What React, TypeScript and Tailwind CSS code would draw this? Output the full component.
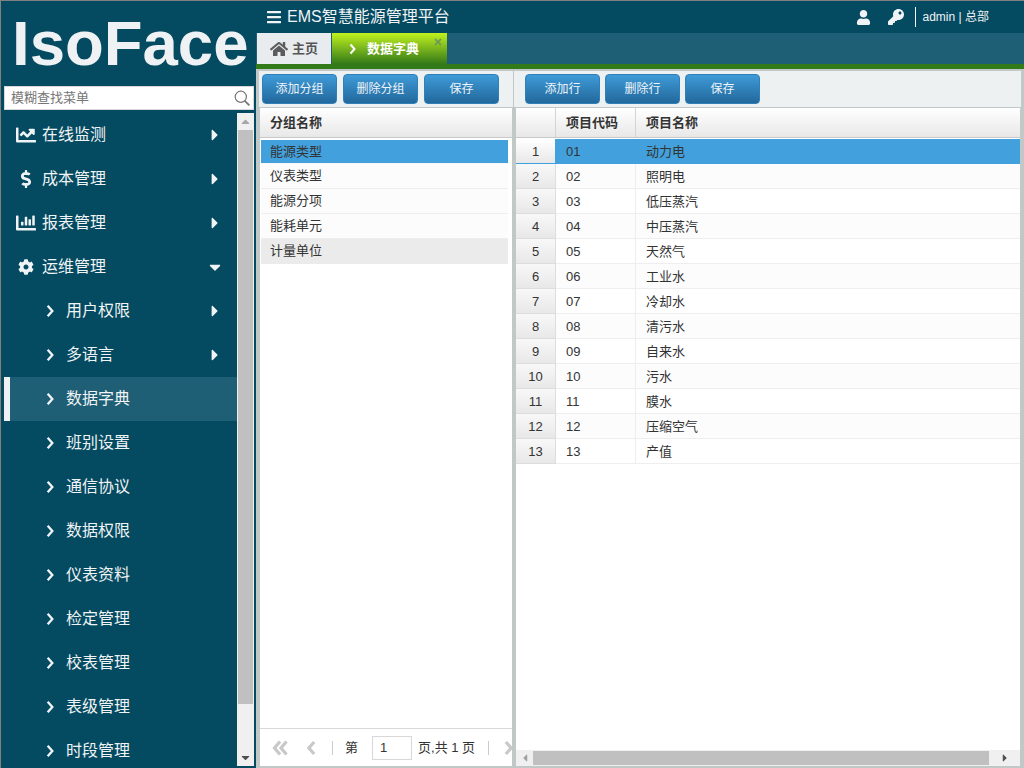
import React from "react";
import { FaBars, FaUser, FaKey, FaHome, FaChartLine, FaDollarSign, FaChartBar, FaCog, FaCaretRight, FaCaretDown, FaCaretLeft, FaCaretUp, FaTimes } from "react-icons/fa";

const font = { fontFamily: '"Liberation Sans","Noto Sans CJK SC",sans-serif' };

type M = { t: string; icon?: React.ReactNode; caret?: "r" | "d"; active?: boolean };
const menu: M[] = [
  { t: "在线监测", icon: <FaChartLine className="text-[20px]" />, caret: "r" },
  { t: "成本管理", icon: <FaDollarSign className="text-[18px]" />, caret: "r" },
  { t: "报表管理", icon: <FaChartBar className="text-[20px]" />, caret: "r" },
  { t: "运维管理", icon: <FaCog className="text-[16px]" />, caret: "d" },
  { t: "用户权限", caret: "r" },
  { t: "多语言", caret: "r" },
  { t: "数据字典", active: true },
  { t: "班别设置" },
  { t: "通信协议" },
  { t: "数据权限" },
  { t: "仪表资料" },
  { t: "检定管理" },
  { t: "校表管理" },
  { t: "表级管理" },
  { t: "时段管理" },
];

const groups = ["能源类型", "仪表类型", "能源分项", "能耗单元", "计量单位"];
const items = ["动力电", "照明电", "低压蒸汽", "中压蒸汽", "天然气", "工业水", "冷却水", "清污水", "自来水", "污水", "膜水", "压缩空气", "产值"];

function Chevron({ dir = "r", className, sw = 2 }: { dir?: "r" | "l"; className?: string; sw?: number }) {
  return (
    <svg viewBox="0 0 8 12" className={className} fill="none" stroke="currentColor" strokeWidth={sw}>
      <polyline points={dir === "r" ? "2,1.5 6,6 2,10.5" : "6,1.5 2,6 6,10.5"} />
    </svg>
  );
}

function Btn({ t }: { t: string }) {
  return (
    <button className="w-[75px] h-[30px] rounded-[4px] border border-[#2f7fb8] bg-gradient-to-b from-[#3f9bd8] to-[#22689c] text-[#eef4f8] text-[12px] flex items-center justify-center">
      {t}
    </button>
  );
}

function MenuRow({ m }: { m: M }) {
  const sub = !m.icon;
  return (
    <div className={`h-[44px] shrink-0 flex items-center text-[#f0f4f6] text-[16px] border-l-[6px] ${m.active ? "bg-[#1f5f75] border-[#eef2f4]" : "border-transparent"}`}>
      {sub ? (
        <>
          <Chevron className="ml-[35px] w-[10px] h-[14px] shrink-0" />
          <span className="ml-[11px]">{m.t}</span>
        </>
      ) : (
        <>
          <span className="w-[32px] flex justify-center shrink-0">{m.icon}</span>
          <span>{m.t}</span>
        </>
      )}
      <span className="ml-auto mr-[15px] flex w-[14px] justify-center">
        {m.caret === "r" && <FaCaretRight className="text-[18px]" />}
        {m.caret === "d" && <FaCaretDown className="text-[18px]" />}
      </span>
    </div>
  );
}

export default function App() {
  return (
    <div style={font} className="w-[1024px] h-[768px] overflow-hidden flex bg-[#c0c8c8] border-t border-[#808080] text-[13px] text-[#333]">
      {/* Sidebar */}
      <aside className="w-[256px] shrink-0 h-full bg-[#044a60] border-l border-[#808080] flex flex-col">
        <div className="h-[85px] shrink-0 text-[#eef2f4] font-bold text-[63.5px] leading-[85px] pl-[11px]">IsoFace</div>
        <div className="ml-[3px] w-[250px] h-[24px] shrink-0 bg-white border border-[#d8d8d8] flex items-center pl-[6px] pr-[3px] text-[13px] text-[#777]">
          <span className="flex-1">模糊查找菜单</span>
          <svg viewBox="0 0 16 16" className="w-[16px] h-[16px] text-[#777]" fill="none" stroke="currentColor" strokeWidth="1.2">
            <circle cx="6.8" cy="6.8" r="5.6" />
            <line x1="10.8" y1="10.8" x2="15.4" y2="15.4" strokeWidth="1.8" />
          </svg>
        </div>
        <div className="flex-1 min-h-0 flex mt-[3px] mb-[2px]">
          <div className="flex-1 min-w-0 overflow-hidden pl-[3px] flex flex-col">
            {menu.map((m) => (
              <MenuRow key={m.t} m={m} />
            ))}
          </div>
          <div className="w-[17px] mr-[2px] bg-[#f0f0f0] flex flex-col items-center shrink-0">
            <div className="h-[17px] shrink-0 flex items-center justify-center text-[#a8a8a8]"><FaCaretUp className="text-[13px]" /></div>
            <div className="w-[15px] flex-1 bg-[#c0c0c0]" />
            <div className="h-[62px] shrink-0 flex items-end pb-[2px] justify-center text-[#505050]"><FaCaretDown className="text-[13px]" /></div>
          </div>
        </div>
      </aside>

      {/* Main */}
      <main className="flex-1 min-w-0 h-full flex flex-col">
        <header className="h-[32px] shrink-0 bg-[#044a60] flex items-center text-[#f0f4f6]">
          <FaBars className="ml-[10px] text-[16px]" />
          <span className="ml-[5px] text-[16px]">EMS智慧能源管理平台</span>
          <div className="ml-auto flex items-center">
            <FaUser className="text-[15px]" />
            <FaKey className="ml-[17px] text-[16px]" />
            <div className="ml-[11px] w-px h-[20px] bg-[#f0f4f6]" />
            <span className="ml-[7px] text-[12px]">admin | 总部</span>
            <div className="w-[35px]" />
          </div>
        </header>
        <nav className="h-[31px] shrink-0 bg-[#1f5f75] flex pl-px">
          <div className="w-[74px] h-full bg-[#e8ecee] flex items-center justify-center text-[#555] font-bold gap-[4px]">
            <FaHome className="text-[18px] text-[#5c5c5c]" />
            <span>主页</span>
          </div>
          <div className="relative ml-px w-[115px] h-full bg-gradient-to-b from-[#c0f31c] to-[#337a18] flex items-center text-white font-bold">
            <Chevron className="ml-[16px] w-[9px] h-[12px] shrink-0" />
            <span className="ml-[10px]">数据字典</span>
            <FaTimes className="absolute right-[4px] top-[4px] text-[10px] text-[#6f9a55]" />
          </div>
        </nav>
        <div className="h-[5px] shrink-0 bg-[#337a18]" />

        <div className="flex-1 min-h-0 flex pt-[2px] pb-[2px] pl-[3px] pr-[3px] gap-px">
          {/* Left panel */}
          <section className="w-[254px] shrink-0 h-full flex flex-col">
            <div className="h-[36px] shrink-0 bg-[#eef1f2] flex items-start pt-[3px] pl-[3px] gap-[6px]">
              <Btn t="添加分组" />
              <Btn t="删除分组" />
              <Btn t="保存" />
            </div>
            <div className="mt-px ml-px w-[252px] flex-1 min-h-0 bg-white flex flex-col">
              <div className="h-[30px] shrink-0 bg-gradient-to-b from-white to-[#e8e8e8] border-b border-[#c8c8c8] flex items-center pl-[10px] font-bold">分组名称</div>
              <div className="flex-1 min-h-0 pl-px pt-[2px] w-[248px]">
                {groups.map((g, i) => (
                  <div key={g} className={`flex items-center pl-[9px] border-b ${i === 0 ? "h-[24px] bg-[#42a0dc] border-[#f5f5f5]" : i === 4 ? "h-[25px] bg-[#ebebeb] border-[#ebebeb]" : "h-[25px] bg-[#fcfcfc] border-[#eeeeee]"}`}>{g}</div>
                ))}
              </div>
              <div className="h-[38px] shrink-0 border-t border-[#d8d8d8] flex items-center overflow-hidden">
                <svg viewBox="0 0 16 16" className="ml-[12px] w-[16px] h-[16px] text-[#c8c8c8] shrink-0" fill="none" stroke="currentColor" strokeWidth="3.2">
                  <polyline points="8,1.5 2.5,8 8,14.5" />
                  <polyline points="14.5,1.5 9,8 14.5,14.5" />
                </svg>
                <Chevron dir="l" sw={2.4} className="ml-[18px] w-[11px] h-[16px] text-[#c8c8c8] shrink-0" />
                <div className="ml-[15px] w-px h-[14px] bg-[#ccc] shrink-0" />
                <span className="ml-[12px] shrink-0">第</span>
                <div className="ml-[14px] w-[40px] h-[24px] border border-[#d8d8d8] flex items-center pl-[7px] shrink-0">1</div>
                <span className="ml-[6px] shrink-0">页,共 1 页</span>
                <div className="ml-[13px] w-px h-[14px] bg-[#ccc] shrink-0" />
                <Chevron sw={2.4} className="ml-[14px] w-[11px] h-[16px] text-[#c8c8c8] shrink-0" />
              </div>
            </div>
          </section>

          {/* Right panel */}
          <section className="flex-1 min-w-0 h-full flex flex-col">
            <div className="h-[36px] shrink-0 bg-[#eef1f2] flex items-start pt-[3px] pl-[11px] gap-[5px]">
              <Btn t="添加行" />
              <Btn t="删除行" />
              <Btn t="保存" />
            </div>
            <div className="mt-px ml-[2px] mr-px flex-1 min-h-0 bg-white flex flex-col">
              <div className="h-[30px] shrink-0 bg-gradient-to-b from-white to-[#e8e8e8] border-b border-[#c8c8c8] flex items-center">
                <div className="w-[40px] h-full border-r border-[#d4d4d4] shrink-0" />
                <div className="w-[80px] h-full flex items-center pl-[10px] border-r border-[#d4d4d4] font-bold shrink-0">项目代码</div>
                <div className="flex-1 h-full flex items-center pl-[10px] font-bold">项目名称</div>
              </div>
              <div className="flex-1 min-h-0 pt-px">
                {items.map((t, i) => (
                  <div key={t} className="h-[25px] flex">
                    <div className={`w-[40px] shrink-0 pt-px bg-gradient-to-b to-[#e8e8e8] border-r border-b flex items-center justify-center ${i === 0 ? "from-white border-[#42a0dc]" : "from-[#f8f8f8] border-[#dddddd]"}`}>{i + 1}</div>
                    <div className={`flex-1 flex border-b ${i === 0 ? "bg-[#42a0dc] border-[#42a0dc]" : "border-[#eeeeee] " + (i % 2 ? "bg-[#fcfcfc]" : "bg-white")}`}>
                      <div className={`w-[80px] shrink-0 pt-px flex items-center pl-[10px] ${i === 0 ? "" : "border-r border-[#eeeeee]"}`}>{String(i + 1).padStart(2, "0")}</div>
                      <div className="flex-1 pt-px flex items-center pl-[10px]">{t}</div>
                    </div>
                  </div>
                ))}
              </div>
              <div className="h-[16px] shrink-0 bg-[#f0f0f0] flex items-center">
                <div className="w-[17px] flex justify-center text-[#a0a0a0]"><FaCaretLeft className="text-[12px]" /></div>
                <div className="w-[456px] h-[14px] bg-[#c0c0c0]" />
                <div className="flex-1 flex justify-center text-[#505050]"><FaCaretRight className="text-[12px]" /></div>
              </div>
            </div>
          </section>
        </div>
      </main>
    </div>
  );
}
